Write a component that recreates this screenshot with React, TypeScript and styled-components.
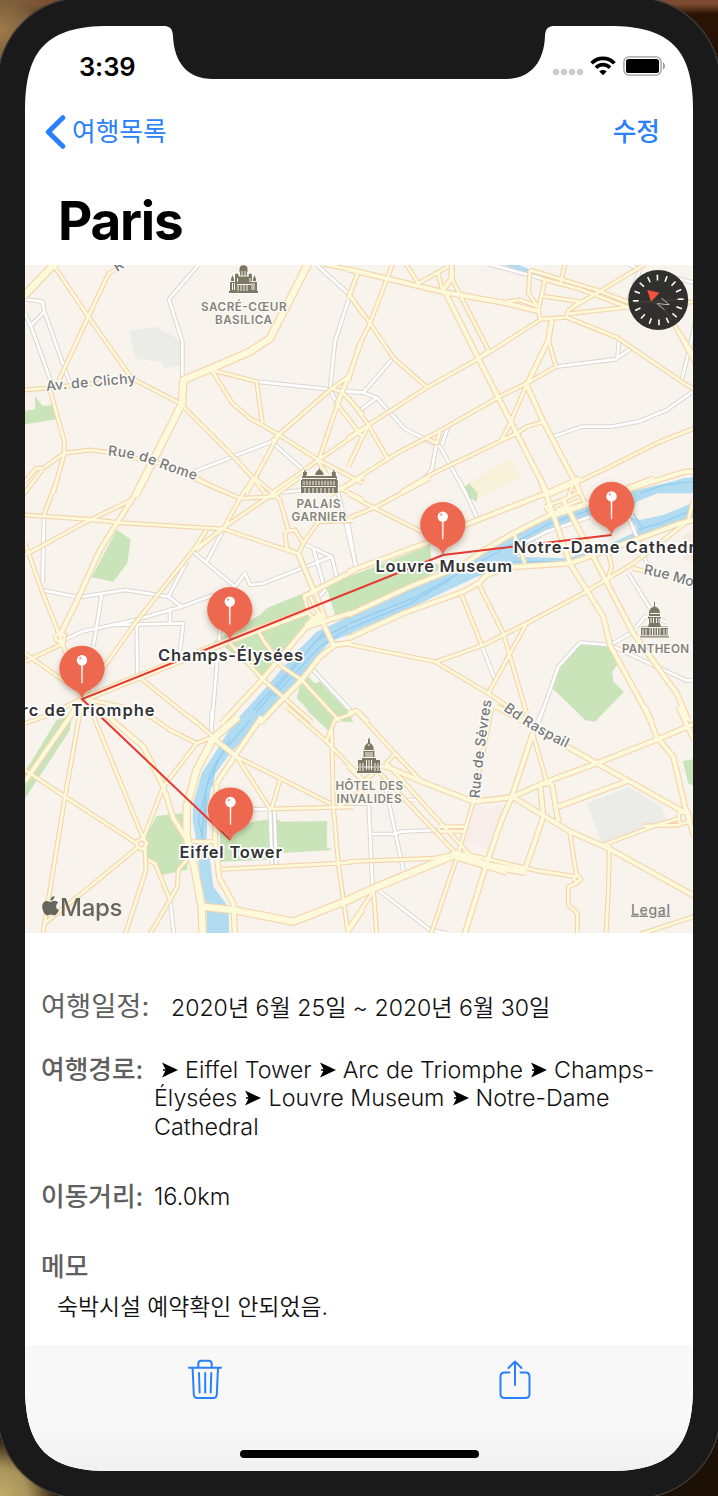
import React from "react";
import styled, { createGlobalStyle } from "styled-components";

const BLUE = "#2a80fb";
const SANS = `Inter, "Noto Sans CJK KR", "Liberation Sans", sans-serif`;

const GlobalStyle = createGlobalStyle`
  * { box-sizing: border-box; }
  html, body { margin: 0; padding: 0; }
  body { font-family: ${SANS}; color: #000; overflow: hidden; }
  svg { display: block; }
`;

/* ---------- phone ---------- */

const Desk = styled.div`
  position: relative;
  width: 718px;
  height: 1496px;
  overflow: hidden;
  background:
    radial-gradient(circle at 0 30px, #a07a4a 0, #7d5f3c 30px, transparent 62px),
    radial-gradient(circle at 718px 1496px, #1d1006 0, #1d1006 60px, transparent 80px),
    radial-gradient(circle at 0 1496px, #c2ad6c 0, #a8935a 28px, #33220e 56px, transparent 70px),
    linear-gradient(#7d4b31 0, #7d4b31 4px, #2b1406 14px, #241205 60px);
`;

const Bezel = styled.div`
  width: 724px;
  height: 1502px;
  margin: -3px;
  padding: 29px 28px;
  border-radius: 86px;
  background: #1a1a1a;
  box-shadow: inset 0 0 0 1px #4b4641;
`;

const Screen = styled.main`
  position: relative;
  display: flex;
  flex-direction: column;
  width: 668px;
  height: 1445px;
  background: #fff;
  clip-path: path("M0 84C0 23 23 0 84 0H584C645 0 668 23 668 84V1361C668 1422 645 1445 584 1445H84C23 1445 0 1422 0 1361Z");
`;

const Notch = styled.svg`
  position: absolute;
  left: 138px;
  top: -1px;
`;

const StatusBar = styled.header`
  display: flex;
  align-items: center;
  height: 80px;
  padding: 0 27px 0 54px;
`;

const Clock = styled.time`
  flex: 1;
  font-size: 25.5px;
  font-weight: 600;
  letter-spacing: -0.1px;
`;

const SignalDots = styled.div`
  display: flex;
  gap: 2px;
  margin: 12px 8px 0 0;
  i { width: 6px; height: 6px; border-radius: 2px; background: #cbcbcb; }
`;

const WifiIcon = styled.svg`
  margin-left: -1px;
`;

const BatteryIcon = styled.svg`
  margin-left: 7px;
`;

const NavBar = styled.nav`
  display: flex;
  align-items: center;
  justify-content: space-between;
  height: 52px;
  padding: 0 33px 0 20px;
`;

const NavButton = styled.button<{ $strong?: boolean }>`
  display: flex;
  align-items: center;
  gap: 6px;
  padding: 0;
  border: 0;
  background: none;
  color: ${BLUE};
  font: ${(p) => (p.$strong ? 500 : 400)} 25.7px/36px ${SANS};
`;

const Title = styled.h1`
  height: 107px;
  margin: 0;
  padding: 31px 0 0 33px;
  font-size: 53px;
  line-height: 64px;
  font-weight: 700;
  letter-spacing: -1.2px;
`;

/* ---------- details ---------- */

const Details = styled.section`
  flex: 1;
  padding: 54px 16px 0;
`;

const Row = styled.div<{ $height: number }>`
  display: flex;
  height: ${(p) => p.$height}px;
`;

const Label = styled.div<{ $width?: number; $light?: boolean }>`
  flex: none;
  width: ${(p) => (p.$width ? `${p.$width}px` : "auto")};
  color: #606060;
  font-size: ${(p) => (p.$light ? 27.3 : 25.7)}px;
  font-weight: ${(p) => (p.$light ? 400 : 500)};
  line-height: 40px;
  white-space: nowrap;
`;

const Value = styled.div<{ $top?: number; $size?: number }>`
  padding-top: ${(p) => p.$top ?? 5.5}px;
  font-size: ${(p) => p.$size ?? 23.3}px;
  font-weight: 350;
  line-height: 28.6px;
  color: #111;
  white-space: nowrap;
`;

const Memo = styled(Value)`
  padding-left: 16px;
`;

const ArrowGlyph = styled.svg`
  display: inline-block;
  margin: 0 0.5px;
`;

const Toolbar = styled.footer`
  display: flex;
  flex-direction: column;
  justify-content: space-between;
  align-items: center;
  height: 126px;
  padding: 13px 0;
  background: linear-gradient(#f8f8f8 60%, #f1f1f1);
`;

const Actions = styled.div`
  display: flex;
  gap: 273.5px;
  padding-left: 1.5px;
`;

const IconButton = styled.button`
  padding: 0;
  border: 0;
  background: none;
`;

const HomeIndicator = styled.div`
  width: 239px;
  height: 8px;
  border-radius: 4px;
  background: #000;
`;

/* ---------- map data: tiles in tile units (three per pixel) ---------- */

type Tile = {
  x: number;
  y: number;
  areas: [string, string][];
  lanes: string[];
  streets: string[];
  avenues: string[];
  boulevards: string[];
  ripples?: string;
};

const GREEN = "#c9e4b8";
const WATER = "#b1dbf0";
const GRAY = "#ebebe8";

const tiles: Tile[] = [
  {
    x: 20,
    y: 260,
    areas: [
      [GRAY, "328,213 410,200 487,245 487,315 430,327 430,305 347,297"],
      [GREEN, "45,408 68,438 100,435 108,478 15,493 15,452 45,448"],
    ],
    lanes: [
      "15,118 68,125 73,155 30,200", "73,155 150,370", "15,160 35,205 95,370",
      "535,15 447,118 487,245 487,360", "710,365 930,388 1030,398",
      "890,15 990,105 945,245 930,388 950,430", "510,640 755,545 850,630",
    ],
    streets: [
      "105,22 205,170 335,355 480,430 640,590 705,660 735,700",
      "300,20 265,42 205,170 115,365", "15,390 90,383 200,372 345,360",
      "90,390 133,545 133,580 100,700",
      "15,665 48,625 68,625 133,580 210,570 265,577 420,610 530,655 610,695", "5,710 65,632",
      "575,330 637,430 690,475 770,520 895,600 1030,670", "575,330 710,365 727,490",
      "910,12 1030,37", "1015,35 988,105 1030,165",
      "1025,245 985,350 930,390 775,525 705,655 680,700",
      "985,350 940,470 895,605 925,650", "930,385 965,395 1030,465", "950,430 1030,535",
      "985,350 950,430", "1030,508 895,600 755,700", "775,525 755,545", "1030,645 930,705",
    ],
    avenues: [],
    boulevards: ["865,10 750,235 690,275 575,325 490,360 486,430 345,710", "105,10 10,110"],
  },
  {
    x: 350,
    y: 260,
    areas: [
      [WATER, "450,10 500,12 590,50 585,62"],
      [WATER, "850,700 1000,655 1035,655 1035,700"],
      ["#f7f1da", "350,672 483,595 513,648 385,720"],
      [GREEN, "342,682 358,670 383,700 380,725 360,715"],
    ],
    lanes: [
      "618,320 795,298 845,265", "807,240 802,298",
      "610,530 695,500 785,500 865,485 950,450 1032,392", "1035,190 1020,260 995,360",
      "-10,395 40,398 130,293", "40,398 80,413 165,507 270,560 350,705", "80,413 25,455",
      "295,500 275,555", "260,550 245,630 220,660", "415,12 585,58",
      "835,12 870,30 835,120", "980,55 1032,68",
    ],
    streets: [
      "265,40 275,85", "168,12 205,70 290,22", "305,55 415,270 385,298",
      "128,12 60,190 25,260 -5,365", "25,35 -5,115", "-5,100 60,190 130,293 232,383",
      "570,180 410,282 230,383 55,495 -5,533", "-5,620 55,495", "-5,412 55,495 115,600",
      "-5,672 140,580 265,515 445,412 530,370 618,320",
      "565,150 570,178 650,172 655,150 740,100 885,12",
      "540,30 740,90 830,125 900,140 960,170 1035,310", "570,55 690,88 830,140 910,160 970,190 1035,290",
      "540,30 535,100 560,135", "585,58 565,150", "575,108 690,125 655,150", "645,12 632,68",
      "650,162 830,142 1032,125", "650,172 800,232 995,365 1032,388", "595,240 618,320",
      "470,125 510,120 565,140",
      "580,485 530,500 500,520 250,640 155,695", "270,515 260,550 230,535",
      "600,705 780,620 930,545 1032,505", "530,375 480,490 452,545",
    ],
    avenues: [
      "-5,28 275,95 470,130 570,155", "305,10 305,55 275,95", "285,95 385,295 500,520 595,705",
      "605,180 595,240 530,375", "530,375 580,485 680,675 690,700", "810,695 1005,635 1035,635",
    ],
    boulevards: [],
  },
  {
    x: 20,
    y: 480,
    areas: [
      [GREEN, "290,150 332,178 322,250 280,305 215,292"],
      [GREEN, "580,485 720,405 740,385 850,340 870,395 860,440 800,510 720,590 600,490"],
      [GREEN, "918,318 995,285 995,400 948,415"],
      [GREEN, "830,655 845,595 862,588 885,610 900,605 985,695 1000,725 900,725"],
      [WATER, "995,403 945,430 890,455 830,515 740,620 645,725 725,725 800,640 850,585 890,530 930,485 995,460"],
    ],
    ripples: "M995,430 890,480 800,590 690,720M995,440 900,500 760,650M920,450 820,560 700,690",
    lanes: [
      "72,105 68,310", "65,330 175,352 315,330 445,350 485,380", "950,20 1010,265",
      "860,195 935,230 730,310 690,315 675,280 645,320 520,215", "610,150 560,245",
      "880,205 915,330 890,360", "935,230 950,290", "500,245 445,350",
      "120,485 185,455 345,420 485,380 580,345", "280,435 490,430 480,510", "450,385 450,430",
      "245,345 220,500", "350,430 352,585", "600,450 590,560 576,730", "870,560 1005,705",
      "760,40 850,30",
    ],
    streets: [
      "335,60 200,125 15,225", "15,105 205,118 300,128 610,147", "112,-5 72,105",
      "15,190 65,330 120,470 185,655", "705,-5 760,40 600,150 530,210",
      "520,-5 660,55 760,50 835,-5", "760,40 780,60 805,150", "610,147 835,222",
      "795,155 825,150 850,190 835,222 800,205 795,155", "850,190 895,125 1000,122", "950,20 1030,60", "960,30 1030,-10",
      "15,545 130,490", "15,520 185,640", "350,585 530,730",
      "852,350 885,335 915,410 890,425 866,400 852,350", "870,350 895,400",
      "715,455 730,480 785,560 845,600 960,725", "630,490 730,600 875,725",
      "105,465 135,465 130,490 108,480 105,465",
      "700,-5 660,55 610,147 520,210 345,430 185,655", "560,150 520,210",
      "185,655 620,480 860,390", "190,662 640,482 865,398",
    ],
    avenues: [
      "835,222 885,340", "1005,270 850,350", "995,398 910,425 860,440 725,600 605,730",
      "995,488 945,495 900,530 845,600 785,660 720,730", "905,420 940,495",
      "380,-10 335,60 240,210 165,375 120,465",
    ],
    boulevards: ["905,400 860,440"],
  },
  {
    x: 350,
    y: 480,
    areas: [
      ["#f4ebdd", "1000,170 1030,150 1030,245 1000,240"],
      [GREEN, "690,495 780,497 805,550 787,575 790,605 822,635 735,725 705,720 608,625 625,560"],
      [GREEN, "-5,290 165,225 240,195 245,250 290,255 190,315 -5,400"],
      [WATER, "-5,405 200,320 380,225 490,165 600,115 725,75 860,30 1030,-10 1030,18 960,25 860,65 850,88 720,110 640,140 580,160 500,230 650,235 750,205 865,152 840,110 870,120 940,105 1030,68 1030,120 870,170 800,200 640,255 490,260 380,290 200,375 -5,462"],
    ],
    ripples: "M0,430 200,350 400,240 600,130 720,90M0,445 180,370 300,300M490,245 640,245M860,150 930,130 1028,90M850,100 880,150M870,40 940,15 1028,5",
    lanes: [
      "325,-5 385,120", "490,205 590,155 720,110", "830,100 860,170 890,250", "835,280 910,400",
      "690,488 780,495 860,450", "860,440 885,410 950,425", "690,488 625,560 565,730", "780,495 1010,602 1032,600", "395,495 435,600", "-5,130 18,270",
    ],
    streets: [
      "-5,115 75,82 240,-5", "-5,42 75,85 215,155", "490,155 525,250",
      "585,80 650,55 690,35 708,75 610,110 585,80", "675,-5 655,50", "620,90 690,60",
      "1005,130 850,250 700,340 530,430 400,495 260,545", "775,220 785,260 770,310",
      "850,265 890,275", "385,310 460,460 480,530 530,700", "335,345 395,495",
      "530,430 480,520 415,640", "-5,493 255,545 415,640 540,725", "-5,700 20,690 55,725", "1030,60 1015,120",
    ],
    avenues: [
      "-5,275 240,185 345,135 600,35 690,-5", "-5,405 180,320 330,260 420,200 490,160 610,100 700,75 820,30 910,-5",
      "-5,475 160,400 340,335 385,310 410,285 480,262 660,250 800,200 990,130 1032,120",
      "570,-5 605,90 660,250 760,410 780,495 905,725", "640,60 730,230 850,460 980,640 1015,720",
    ],
    boulevards: [],
  },
  {
    x: 20,
    y: 710,
    areas: [
      [GREEN, "110,30 155,15 150,60 15,265 15,185"],
      [GREEN, "410,318 490,310 515,395 500,480 425,495 380,440 375,380"],
      [GREEN, "600,365 700,335 765,325 785,335 922,333 920,410 937,420 770,430 740,450 600,455"],
      [GREEN, "860,0 1000,0 945,30 925,62"],
      [WATER, "650,25 600,105 545,190 520,280 518,330 530,400 540,500 560,590 560,675 628,675 625,590 580,530 570,450 560,390 562,290 580,200 630,130 735,25 700,5"],
    ],
    ripples: "M690,30 600,140 560,230 545,380M630,90 570,190 535,330 550,390M590,150 575,230",
    lanes: ["450,570 462,675", "575,0 575,70", "700,298 750,297", "750,300 756,465", "763,300 769,465"],
    streets: [
      "15,40 100,10 185,-35", "185,-20 135,260 68,675", "200,-30 225,30 370,385",
      "15,180 135,260 350,400", "350,395 370,385 380,400 370,418 352,412 350,395", "350,415 75,640",
      "370,385 430,230 530,100 580,80", "375,410 378,480 315,675", "385,450 405,460 450,570 388,675",
      "510,20 580,80", "185,-35 330,-5 400,25 450,60 530,100", "508,440 475,480 472,530 450,570",
      "515,395 590,395", "650,140 930,280", "650,140 750,297", "780,210 755,295",
      "750,297 945,292 1000,291", "605,478 955,460 1000,456", "935,60 940,290 955,460 985,675",
      "800,-10 920,95 1030,210", "1000,10 945,30 930,65 920,95", "955,290 1030,240", "1030,600 985,665",
      "370,110 430,230",
    ],
    avenues: [
      "15,215 80,120 150,20 185,-35", "230,-10 370,110 430,230 460,325 505,395",
      "725,20 650,130 590,220 585,390 598,505 640,580 645,675", "580,85 650,140",
    ],
    boulevards: [
      "655,20 580,85 530,180 500,290 500,380 525,480 545,590 548,675",
      "545,590 640,600 820,635 1000,565",
    ],
  },
  {
    x: 350,
    y: 710,
    areas: [
      [GRAY, "710,280 835,230 935,290 948,330 755,400"],
      ["#f9edea", "370,285 430,295 452,275 460,325 420,425 385,405 340,400"],
      [GREEN, "998,153 1032,147 1032,228 1015,220"],
    ],
    lanes: [
      "55,260 68,540", "100,200 160,480", "65,372 135,372", "130,372 155,365 265,360",
      "85,540 240,660 290,670", "580,-5 548,70", "0,281 50,280", "110,270 195,270",
    ],
    streets: [
      "-5,5 20,5 135,130 215,215", "105,165 135,130", "-5,170 40,215 100,165",
      "100,175 115,165 355,430", "90,190 318,430", "270,350 345,350", "270,364 345,364",
      "370,275 325,430 243,672", "548,70 590,215", "425,-5 370,275",
      "-5,455 250,445 320,430", "70,535 80,672", "70,545 -5,655", "320,445 470,490",
      "660,370 680,500", "670,505 682,495 693,507 682,518 670,505", "682,518 655,530 655,585 682,610 682,672",
      "778,405 775,550 768,672", "760,405 920,345 990,325", "880,348 990,345",
      "985,310 1015,305 1022,335 990,342 985,310", "872,672 1032,620", "340,430 560,482 680,500",
    ],
    avenues: [
      "110,170 215,215 370,275 485,262 590,215 740,160 930,85 1032,42",
      "548,70 485,262 455,330 410,460 343,675", "570,220 580,320 525,480", "606,222 625,335",
      "490,262 660,365 775,415 1032,557", "625,290 835,212 1000,305", "440,-10 740,160 835,212",
      "885,-10 920,80 970,140 1005,290 1032,380", "985,-10 1032,90", "570,220 606,222",
    ],
    boulevards: ["-10,572 70,535 320,432 420,468 525,485"],
  },
];

const toPath = (lines: string[]) => lines.map((l) => `M${l}`).join("");

const RoadLayer = ({ pick, stroke, width }: { pick: (t: Tile) => string[]; stroke: string; width: number }) => (
  <>
    {tiles.map((t) => (
      <path
        key={`${t.x}-${t.y}`}
        transform={`translate(${t.x} ${t.y}) scale(.33333)`}
        d={toPath(pick(t))}
        fill="none"
        stroke={stroke}
        strokeWidth={width}
        strokeLinejoin="round"
      />
    ))}
  </>
);

const MapCanvas = styled.svg`
  flex: none;
  font-family: Inter, "Liberation Sans", sans-serif;
`;

const PlaceLabel = styled.text`
  font-size: 16.5px;
  font-weight: 600;
  fill: #333336;
  stroke: #fff;
  stroke-width: 3.5px;
  stroke-linejoin: round;
  paint-order: stroke;
`;

const PoiLabel = styled.text`
  font-size: 11.7px;
  font-weight: 600;
  fill: #87837a;
  stroke: #fbf9f5;
  stroke-width: 2.5px;
  paint-order: stroke;
`;

const StreetLabel = styled.text`
  font-size: 14px;
  font-weight: 500;
  fill: #77787a;
  stroke: #fbf9f5;
  stroke-width: 3px;
  paint-order: stroke;
`;

const pins = [
  { x: 82, y: 668.3, name: "Arc de Triomphe", start: 8.5, width: 146, base: 716.3 },
  { x: 229.8, y: 609.6, name: "Champs-Élysées", start: 158, width: 145, base: 661.3 },
  { x: 442.8, y: 524.6, name: "Louvre Museum", start: 375.5, width: 136.5, base: 571.8 },
  { x: 611.5, y: 504.4, name: "Notre-Dame Cathedral", start: 513.5, width: 197, base: 552.8 },
  { x: 230.5, y: 810, name: "Eiffel Tower", start: 179.5, width: 102.5, base: 858.3 },
];

const pois = [
  { x: 201, y: 311, w: 85.5, text: "SACRÉ-CŒUR" },
  { x: 215, y: 323.5, w: 57, text: "BASILICA" },
  { x: 296.5, y: 507.5, w: 44, text: "PALAIS" },
  { x: 291.5, y: 520.5, w: 54.5, text: "GARNIER" },
  { x: 622, y: 653, w: 67, text: "PANTHEON" },
  { x: 335.5, y: 789.5, w: 67.5, text: "HÔTEL DES" },
  { x: 336.5, y: 802.5, w: 65, text: "INVALIDES" },
];

const Pin = ({ x, y }: { x: number; y: number }) => (
  <g transform={`translate(${x} ${y})`}>
    <path
      d="M0 30.5C-2.500 23.500 -6 22.500 -10.500 20A22.600 22.600 0 1 1 10.500 20C6 22.500 2.500 23.500 0 30.500Z"
      fill="#ee6850"
      filter="url(#pinShadow)"
    />
    <path d="M-.6-4h1.200l-.2 18-.4 1-.4-1z" fill="#fff" stroke="#fff" strokeWidth=".4" />
    <circle cy="-8" r="5.200" fill="#fff" />
    <circle cx="-1.700" cy="-10" r="1.200" fill="#f3a091" />
  </g>
);

const STONE = "#7d7866";

const Buildings = () => (
  <g fill={STONE} stroke="#fbf9f5" strokeWidth="2" paintOrder="stroke">
    {/* Sacré-Cœur */}
    <path d="M229 293v-2h1v-9h1v-3l1.500-4 1.500 4v2h1v-6c.5-2 3-2 3.500 0v1h1v-8l1-2 3-1 3 1 1 2v8h1v-1c.5-2 3-2 3.500 0v6h1v-2l1.500-4 1.500 4v3h1v9h1v2z" />
    {/* Palais Garnier */}
    <path d="M301 493v-13h1v-4h1v-4h1l1-3 1 3h1v3h8l1-3 3-3v-2l.8 2 3 3 1 3h8v-3h1l1-3 1 3h1v4h1v4h1v13z" />
    {/* Pantheon */}
    <path d="M640 637.500v-2h1v-9h7l1-3v-5h-1v-2h1v-3c0-4 2-6 5-7v-5h1v5c3 1 5 3 5 7v3h1v2h-1v5l1 3h7v9h1v2z" />
    {/* Invalides */}
    <path d="M357 773v-2h1v-11h4v-2h1.500v-8h.7c0-4 1.500-6 3.800-7v-3l1-3 1 3v3c2.300 1 3.800 3 3.800 7h.7v8h1.500v2h4v11h1v2z" />
    <g fill="none" stroke="#f8f4ed" strokeWidth="1" paintOrder="normal">
      <path d="M232.500 283v7m2-7v7m3-12v4m2-10v4m2.500-5v5m3-5v5m2.500-4v4m2.500 2v4m2 1v7m2-7v7m-16-5v6m3-6v6m3-6v6m3-6v6M230 281.500h5m16 0h5M239 276h10M237 284.500h14" />
      <path d="M304 481v4m3-4v4m3-4v4m3-4v4m3-4v4m3-4v4m3-4v4m3-4v4m3-4v4m3-4v4m3-4v4M302 478.500h34M302 486.500h34M305 488v5m4-5v5m4-5v5m4-5v5m4-5v5m4-5v5m4-5v5m4-5v5M306 475.500h26" />
      <path d="M643 629v6m3-6v6m4-7v7m2.500-7v7m2.500-7v7m2.500-7v7m2.500-7v7m4-6v6m3-6v6M649 616.500h12M641 627.500h28M651 618v5m2.500-5v5m3-5v5m2.500-5v5M650 613.500h10M640 635.800h30" />
      <path d="M360 763v3m3-3v3m-3 2v3m3-3v3m12-8v3m3-3v3m-3 2v3m3-3v3M362 757.500h14M358 767h22M364 750.500h10M366 752v5m2-5v5m2-5v5m2-5v5M366.500 760v10m2.500-10v10m2.500-10v10M368 745h2" />
    </g>
  </g>
);

const Compass = () => (
  <g transform="translate(658.2 300)">
    <circle r="30" fill="#2a2826" fillOpacity=".96" />
    <path d="M-24 3L28 -1M-15 1C5 2 8 12 14 20" stroke="#4b4538" strokeWidth="1.500" fill="none" opacity=".6" />
    {Array.from({ length: 16 }, (_, i) => (
      <path key={i} d="M0-25.300V-19.500" stroke="#fff" strokeWidth="1.600" transform={`rotate(${i * 22.5 - 2})`} />
    ))}
    <path d="M-11-10L1.300-7.300L-7.200 1.800Z" fill="#f4503d" />
    <text transform="translate(5 4.300) rotate(-50)" y="5" textAnchor="middle" fontSize="14" fontWeight="250" fill="#d5d3ce">
      N
    </text>
  </g>
);

const CASING = "#f4d5ae";
const ROADBED = "#fdf9db";

const StreetMap = () => (
  <MapCanvas width="668" height="668" viewBox="25 265 668 668">
    <defs>
      <filter id="pinShadow" x="-40%" y="-30%" width="180%" height="180%">
        <feDropShadow dx="0" dy="3" stdDeviation="3" floodColor="#5a4a3a" floodOpacity=".4" />
      </filter>
      <path id="clichy" d="M46.500 391Q90 386.500 137 383" />
      <path id="rome" d="M107.500 455.500Q133 457 153 465Q175 474 200 481.500" />
      <path id="raspail" d="M503 710Q530 731 570 750" />
      <path id="sevres" d="M479.500 798.500Q483 750 492.500 696" />
      <path id="monge" d="M643.500 574Q672 579 715 595" />
    </defs>
    <rect x="25" y="265" width="668" height="668" fill="#f8f4ed" />
    {tiles.map((t) => (
      <g key={`${t.x}-${t.y}`} transform={`translate(${t.x} ${t.y}) scale(.33333)`}>
        {t.areas.map(([fill, points]) => (
          <polygon key={points} fill={fill} points={points} />
        ))}
        {t.ripples && <path d={t.ripples} fill="none" stroke="#93cdf2" strokeWidth="4" />}
      </g>
    ))}
    <RoadLayer pick={(t) => t.lanes} stroke="#dad6d1" width={14} />
    <RoadLayer pick={(t) => t.lanes} stroke="#fff" width={8} />
    <RoadLayer pick={(t) => t.boulevards} stroke={CASING} width={26} />
    <RoadLayer pick={(t) => t.avenues} stroke={CASING} width={19} />
    <RoadLayer pick={(t) => t.streets} stroke={CASING} width={15} />
    <RoadLayer pick={(t) => t.boulevards} stroke={ROADBED} width={19} />
    <RoadLayer pick={(t) => t.avenues} stroke={ROADBED} width={12} />
    <RoadLayer pick={(t) => t.streets} stroke={ROADBED} width={8} />

    <Buildings />
    {pois.map((p) => (
      <PoiLabel key={p.text} x={p.x} y={p.y} textLength={p.w}>
        {p.text}
      </PoiLabel>
    ))}
    <StreetLabel><textPath href="#clichy" textLength="90">Av. de Clichy</textPath></StreetLabel>
    <StreetLabel><textPath href="#rome" textLength="92">Rue de Rome</textPath></StreetLabel>
    <StreetLabel><textPath href="#raspail" textLength="74">Bd Raspail</textPath></StreetLabel>
    <StreetLabel><textPath href="#sevres" textLength="99">Rue de Sèvres</textPath></StreetLabel>
    <StreetLabel><textPath href="#monge">Rue Monge</textPath></StreetLabel>
    <StreetLabel transform="translate(117 272) rotate(-32)">R</StreetLabel>

    <path d="M230.500 840L82 699L229.800 640L443 555L611.500 535" fill="none" stroke="#e8392f" strokeWidth="2" />
    {pins.map((p) => (
      <Pin key={p.name} x={p.x} y={p.y} />
    ))}
    {pins.map((p) => (
      <PlaceLabel key={p.name} x={p.start} y={p.base} textLength={p.width}>
        {p.name}
      </PlaceLabel>
    ))}

    <g fill="#5f5e58" opacity=".95">
      <path
        transform="translate(41.500 896)"
        d="M13 4.800c1.500 0 2.800.8 3.700 2-3 1.900-2.600 6 .7 7.300-.8 2.300-2.600 5.300-4.500 5.300-1.300 0-1.900-.8-3.500-.8s-2.200.8-3.500.8C3.500 19.400.7 14.700.7 10.700.7 6.900 3 4.900 5.400 4.900c1.500 0 2.700 1 3.700 1S11.300 4.800 13 4.800zM12.900 0c.3 2.400-1.700 4.600-4 4.500C8.700 2.400 10.600.2 12.900 0z"
      />
      <text x="60" y="915.500" fontSize="24" fontWeight="500" textLength="62.500">
        Maps
      </text>
    </g>
    <text x="631" y="914.500" fontSize="14" fontWeight="500" fill="#84827e" textLength="39" textDecoration="underline">
      Legal
    </text>
    <Compass />
  </MapCanvas>
);

const Arrow = () => (
  <ArrowGlyph width="17" height="16" viewBox="0 0 17 16">
    <path d="M1 .5L17 8L1 15.500L4.500 8.800H2V7.200H4.500Z" fill="#000" />
  </ArrowGlyph>
);

export default function App() {
  return (
    <Desk>
      <GlobalStyle />
      <Bezel>
        <Screen>
          <Notch width="394" height="55" viewBox="163 25 394 55">
            <path d="M163 25V26C170 26 172.500 28.500 173 36C174 62 187 79 213 79H505C531 79 544 62 545 36C545.500 28.500 548 26 555 26V25Z" fill="#1a1a1a" />
          </Notch>
          <StatusBar>
            <Clock>3:39</Clock>
            <SignalDots><i /><i /><i /><i /></SignalDots>
            <WifiIcon width="26" height="20" viewBox="0 0 26 20" fill="none" stroke="#000" strokeWidth="3.700">
              <path d="M1.600 7.200C8 .7 18 .7 24.400 7.200M6 11.700c4-4 10-4 14 0" />
              <path d="M9.300 15.500c2.200-2 5.200-2 7.400 0L13 19.200z" fill="#000" stroke="none" />
            </WifiIcon>
            <BatteryIcon width="43" height="20" viewBox="0 0 43 20">
              <rect x=".9" y=".9" width="37.200" height="18.200" rx="5" fill="none" stroke="#9a9a9a" strokeWidth="1.300" />
              <rect x="3" y="3" width="33" height="14" rx="2.600" />
              <path d="M40 6.500c2.600 1 2.600 6 0 7z" fill="#9a9a9a" />
            </BatteryIcon>
          </StatusBar>
          <NavBar>
            <NavButton>
              <svg width="21" height="34" viewBox="0 0 21 34" fill="none" stroke={BLUE} strokeWidth="5" strokeLinecap="round" strokeLinejoin="round">
                <path d="M17.800 2.700L3.300 17L17.800 31.300" />
              </svg>
              여행목록
            </NavButton>
            <NavButton $strong>수정</NavButton>
          </NavBar>
          <Title>Paris</Title>
          <StreetMap />
          <Details>
            <Row $height={63}>
              <Label $width={130} $light>여행일정:</Label>
              <Value $top={6.5} $size={23.1}>2020년 6월 25일 ~ 2020년 6월 30일</Value>
            </Row>
            <Row $height={127}>
              <Label $width={113}>여행경로:</Label>
              <Value>
                &nbsp;<Arrow /> Eiffel Tower <Arrow /> Arc de Triomphe <Arrow /> Champs-
                <br />
                Élysées <Arrow /> Louvre Museum <Arrow /> Notre-Dame
                <br />
                Cathedral
              </Value>
            </Row>
            <Row $height={70}>
              <Label $width={113}>이동거리:</Label>
              <Value $size={23.6}>16.0km</Value>
            </Row>
            <Row $height={40}>
              <Label>메모</Label>
            </Row>
            <Memo $top={6} $size={22.8}>숙박시설 예약확인 안되었음.</Memo>
          </Details>
          <Toolbar>
            <Actions>
              <IconButton aria-label="삭제">
                <svg width="36" height="42" viewBox="0 0 36 42" fill="none" stroke={BLUE} strokeWidth="2" strokeLinecap="round" strokeLinejoin="round">
                  <path d="M2 9.700H34M11.300 9.500V6Q11.300 2.800 14.500 2.800H21.500Q24.700 2.800 24.700 6V9.500M5.600 10L6.800 36.500Q7 40 10.300 40H26.500Q29.600 40 29.800 36.500L31 10M12 15L12.600 34.500M18.200 15V34.500M24.300 15L23.700 34.500" />
                </svg>
              </IconButton>
              <IconButton aria-label="공유">
                <svg width="36" height="42" viewBox="0 0 36 42" fill="none" stroke={BLUE} strokeWidth="2" strokeLinecap="round" strokeLinejoin="round">
                  <path d="M12.500 14.500H7.500Q3.500 14.500 3.500 18.500V36Q3.500 40 7.500 40H28.500Q32.500 40 32.500 36V18.500Q32.500 14.500 28.500 14.500H23.500M18 27V3.500M11.500 10L18 3.500L24.500 10" />
                </svg>
              </IconButton>
            </Actions>
            <HomeIndicator />
          </Toolbar>
        </Screen>
      </Bezel>
    </Desk>
  );
}
